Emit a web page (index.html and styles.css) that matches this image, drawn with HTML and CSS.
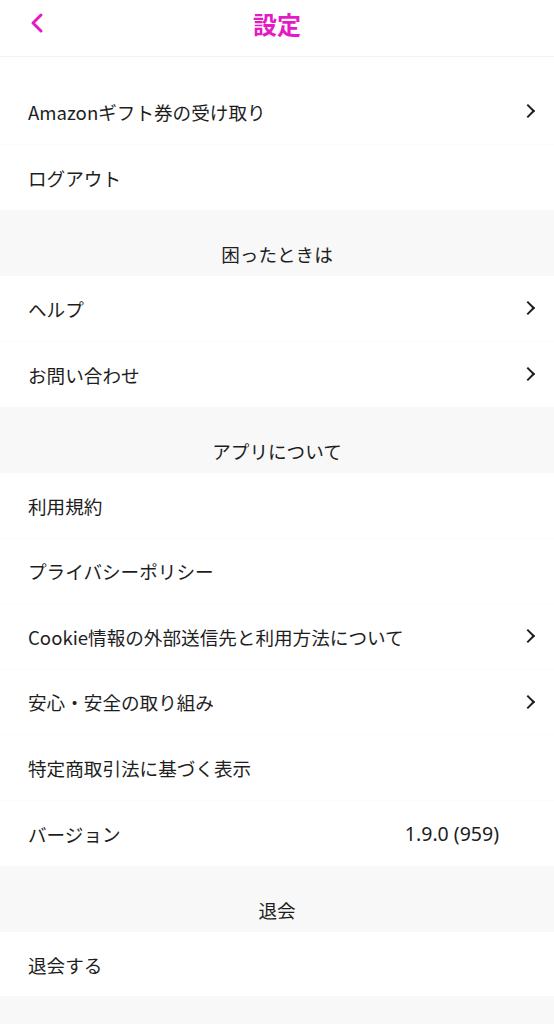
FILE: index.html
```html
<!DOCTYPE html>
<html lang="ja">
<head>
<meta charset="utf-8">
<link rel="stylesheet" href="styles.css">
</head>
<body>
<header class="topbar">
  <span class="back"><svg width="16" height="22" viewBox="0 0 16 22"><path d="M12 3 L4 11 L12 19" fill="none" stroke="#e619c3" stroke-width="3" stroke-linecap="round" stroke-linejoin="round"/></svg></span>
  <h1 class="title">設定</h1>
</header>
<main>
  <div class="group first">
    <div class="row"><span>Amazonギフト券の受け取り</span><i class="chev"></i></div>
    <div class="row"><span>ログアウト</span></div>
  </div>
  <div class="section">困ったときは</div>
  <div class="group">
    <div class="row"><span>ヘルプ</span><i class="chev"></i></div>
    <div class="row"><span>お問い合わせ</span><i class="chev"></i></div>
  </div>
  <div class="section">アプリについて</div>
  <div class="group">
    <div class="row"><span>利用規約</span></div>
    <div class="row"><span>プライバシーポリシー</span></div>
    <div class="row"><span>Cookie情報の外部送信先と利用方法について</span><i class="chev"></i></div>
    <div class="row"><span>安心・安全の取り組み</span><i class="chev"></i></div>
    <div class="row"><span>特定商取引法に基づく表示</span></div>
    <div class="row"><span>バージョン</span><span class="ver">1.9.0 (959)</span></div>
  </div>
  <div class="section">退会</div>
  <div class="group">
    <div class="row last"><span>退会する</span></div>
  </div>
  <div class="footer"></div>
</main>
</body>
</html>
```
FILE: styles.css
```css
html, body {
  margin: 0;
  padding: 0;
  background: #ffffff;
}
body {
  font-family: "Noto Sans CJK JP", "Noto Sans", sans-serif;
  color: #1e1e1e;
  width: 554px;
}
.topbar {
  height: 56px;
  border-bottom: 1px solid #f2f2f2;
  display: flex;
  align-items: center;
  justify-content: center;
  position: relative;
}
.back {
  position: absolute;
  left: 29px;
  top: 12px;
  width: 16px;
  height: 22px;
  display: block;
}
.back svg { display: block; }
.title {
  margin: 0;
  margin-top: -10px;
  font-size: 24px;
  font-weight: 700;
  color: #e619c3;
}
.group { background: #fff; }
.group.first { padding-top: 22px; }
.row {
  height: 65.5px;
  box-sizing: border-box;
  display: flex;
  align-items: center;
  justify-content: space-between;
  padding: 0 17px 0 28px;
  font-size: 18.6px;
  border-bottom: 1px solid #fbfbfb;
}
.row.last { height: 64px; border-bottom: none; }
.group .row:last-child { border-bottom: none; }
.chev {
  width: 8px;
  height: 8px;
  border-top: 2px solid #1e1e1e;
  border-right: 2px solid #1e1e1e;
  transform: rotate(45deg);
  margin-right: 4px;
}
.ver {
  margin-right: 38px;
  font-family: "Noto Sans", sans-serif;
  font-size: 19.5px;
}
.section {
  background: #f8f8f8;
  height: 66px;
  display: flex;
  align-items: flex-end;
  justify-content: center;
  padding-bottom: 9px;
  box-sizing: border-box;
  font-size: 18.6px;
}
.footer {
  background: #f8f8f8;
  height: 40px;
}
```
